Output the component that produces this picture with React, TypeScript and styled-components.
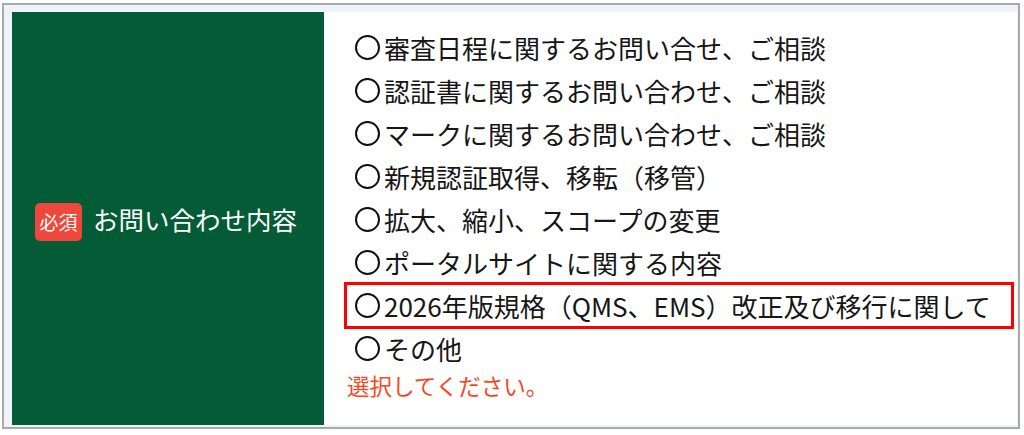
import React from "react";
import styled, { createGlobalStyle } from "styled-components";

// GLOBAL --------------------------->

const GlobalStyle = createGlobalStyle`
  html, body {
    margin: 0;
    padding: 0;
    background: #ffffff;
  }
  body {
    font-family: "Noto Sans CJK JP", "Noto Sans", sans-serif;
    color: #161616;
  }
`;

// STYLED COMPONENTS --------------------------->

const Frame = styled.div`
  box-sizing: border-box;
  width: 1018px;
  height: 426px;
  margin: 3px 0 0 2px;
  border: 2px solid #a9a9a9;
  background: #eef3f9;
  padding: 7px 1px 2px 8px;
  display: flex;
`;

const HeadCell = styled.div`
  width: 312px;
  flex-shrink: 0;
  background: #035c35;
  display: flex;
  align-items: center;
  padding-left: 23px;
  box-sizing: border-box;
`;

const RequiredBadge = styled.span`
  display: inline-flex;
  align-items: center;
  justify-content: center;
  width: 47px;
  height: 38px;
  border-radius: 5px;
  background: #f0473d;
  color: #ffffff;
  font-size: 19px;
  line-height: 1;
  margin-right: 11px;
  margin-top: 6px;
`;

const HeadLabel = styled.span`
  color: #ffffff;
  font-size: 25.5px;
  line-height: 1;
`;

const BodyCell = styled.div`
  flex: 1;
  background: #ffffff;
  padding: 14px 5px 0 22px;
  display: flex;
  flex-direction: column;
`;

const Option = styled.label<{ $marked?: boolean }>`
  display: flex;
  align-items: center;
  height: 43px;
  padding-left: 9px;
  font-size: 26px;
  line-height: 1;
  white-space: nowrap;
  outline: ${(p) => (p.$marked ? "3px solid #ff0000" : "none")};
  outline-offset: -1px;
`;

const RadioMark = styled.span`
  box-sizing: border-box;
  width: 25px;
  height: 25px;
  border: 2px solid #111111;
  border-radius: 50%;
  margin-right: 4px;
  flex-shrink: 0;
`;

const ErrorText = styled.div`
  color: #f4481f;
  font-size: 22.5px;
  line-height: 30px;
  margin-left: 1px;
`;

// DATA --------------------------->

const options = [
  "審査日程に関するお問い合せ、ご相談",
  "認証書に関するお問い合わせ、ご相談",
  "マークに関するお問い合わせ、ご相談",
  "新規認証取得、移転（移管）",
  "拡大、縮小、スコープの変更",
  "ポータルサイトに関する内容",
  "2026年版規格（QMS、EMS）改正及び移行に関して",
  "その他",
];

// FUNCTIONAL COMPONENT --------------------------->

const App = () => {
  return (
    <>
      <GlobalStyle />
      <Frame>
        <HeadCell>
          <RequiredBadge>必須</RequiredBadge>
          <HeadLabel>お問い合わせ内容</HeadLabel>
        </HeadCell>
        <BodyCell>
          {options.map((text, i) => (
            <Option key={text} $marked={i === 6}>
              <RadioMark />
              {text}
            </Option>
          ))}
          <ErrorText>選択してください。</ErrorText>
        </BodyCell>
      </Frame>
    </>
  );
};

export default App;
